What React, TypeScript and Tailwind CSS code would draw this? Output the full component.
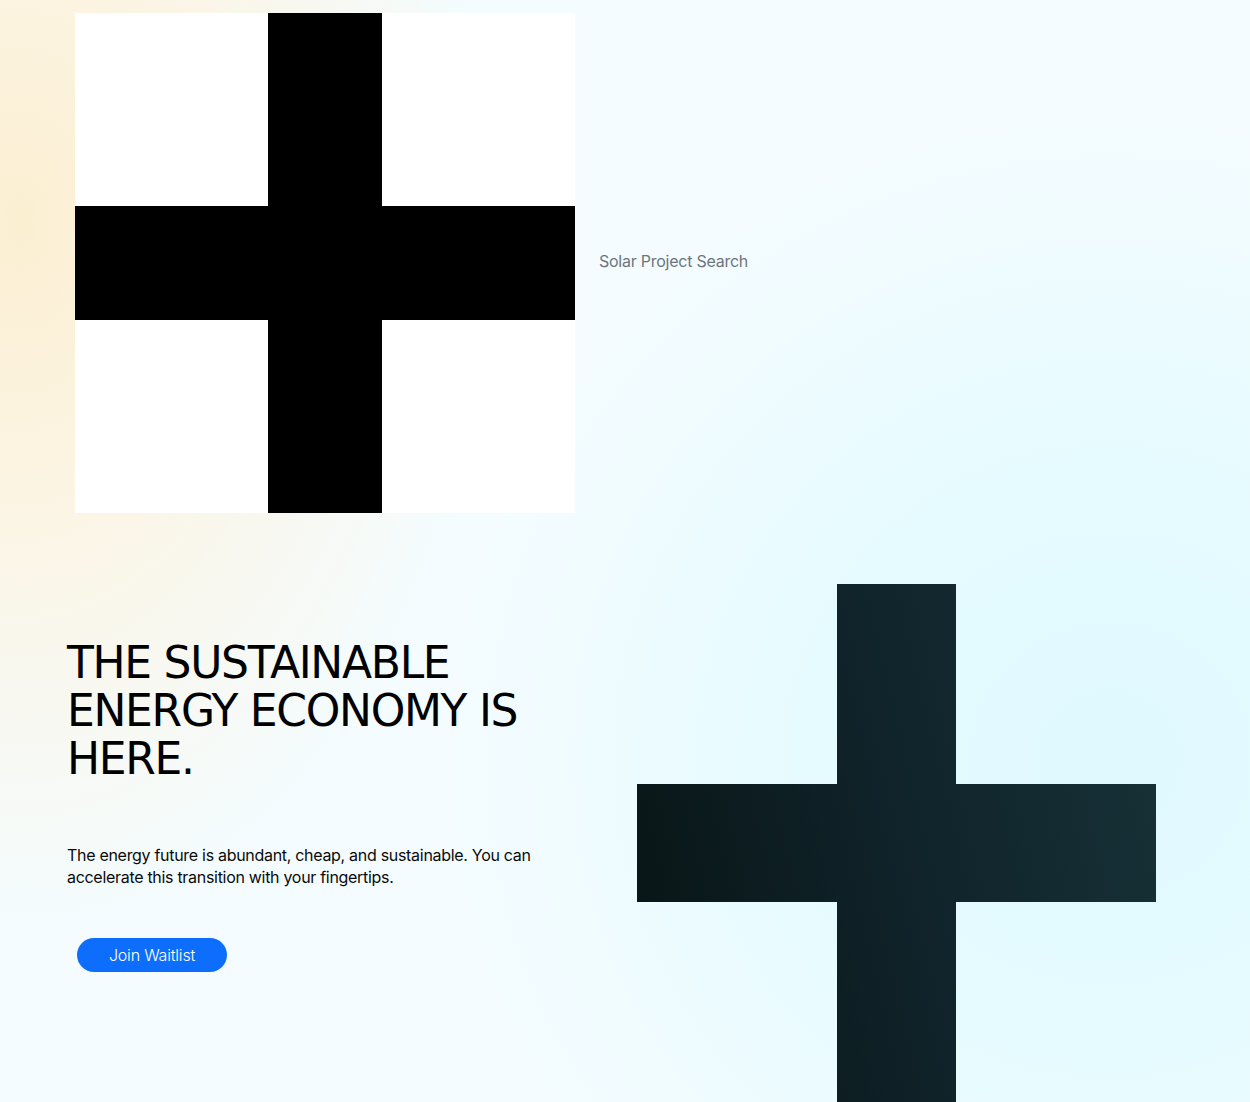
import React from "react";

const CrossLogo: React.FC = () => (
  <svg width="500" height="500" viewBox="0 0 500 500" className="shrink-0">
    <rect x="0" y="0" width="500" height="500" fill="#ffffff" />
    <rect x="193" y="0" width="114" height="500" fill="#000000" />
    <rect x="0" y="193" width="500" height="114" fill="#000000" />
  </svg>
);

const HeroCross: React.FC = () => (
  <svg width="519" height="519" viewBox="0 0 519 519" className="shrink-0">
    <defs>
      <linearGradient id="heroCross" x1="0" y1="0.62" x2="1" y2="0.38">
        <stop offset="0" stopColor="#091617" />
        <stop offset="0.5" stopColor="#10232a" />
        <stop offset="1" stopColor="#163036" />
      </linearGradient>
    </defs>
    <path
      d="M200 0H319V200H519V318H319V519H200V318H0V200H200Z"
      fill="url(#heroCross)"
    />
  </svg>
);

const App: React.FC = () => {
  return (
    <div className="h-[1102px] w-full overflow-hidden bg-[#f4fcff] bg-[radial-gradient(ellipse_480px_720px_at_20px_220px,#fbefd2_0%,#fcf4e2_35%,rgba(252,248,238,0)_100%),radial-gradient(ellipse_660px_640px_at_1110px_760px,#dff9ff_0%,#e6fbff_45%,rgba(240,252,255,0)_100%)]">
      <header className="flex items-center pl-[75px] pt-[13px]">
        <CrossLogo />
        <span className="ml-6 mb-1 text-[16px] leading-6 tracking-[-0.25px] text-[#6c757d] font-['Inter','Liberation_Sans',sans-serif]">
          Solar Project Search
        </span>
      </header>

      <section className="mt-[71px] flex">
        <div className="ml-[67px] w-[570px] shrink-0 pt-[55px]">
          <h1 className="text-[44px] leading-[48px] tracking-[-1.3px] font-medium text-black font-['DejaVu_Sans','Liberation_Sans',sans-serif]">
            THE SUSTAINABLE
            <br />
            ENERGY ECONOMY IS
            <br />
            HERE.
          </h1>
          <p className="mt-[61px] w-[490px] text-[16px] leading-[22px] tracking-[-0.3px] text-[#0a0a0a] font-['Inter','Liberation_Sans',sans-serif]">
            The energy future is abundant, cheap, and sustainable. You can
            accelerate this transition with your fingertips.
          </p>
          <button className="ml-[10px] mt-[50px] h-[34px] w-[150px] rounded-full bg-[#0d6efd] text-[16px] font-light tracking-[-0.2px] text-white font-['Inter','Liberation_Sans',sans-serif]">
            Join Waitlist
          </button>
        </div>
        <HeroCross />
      </section>
    </div>
  );
};

export default App;
